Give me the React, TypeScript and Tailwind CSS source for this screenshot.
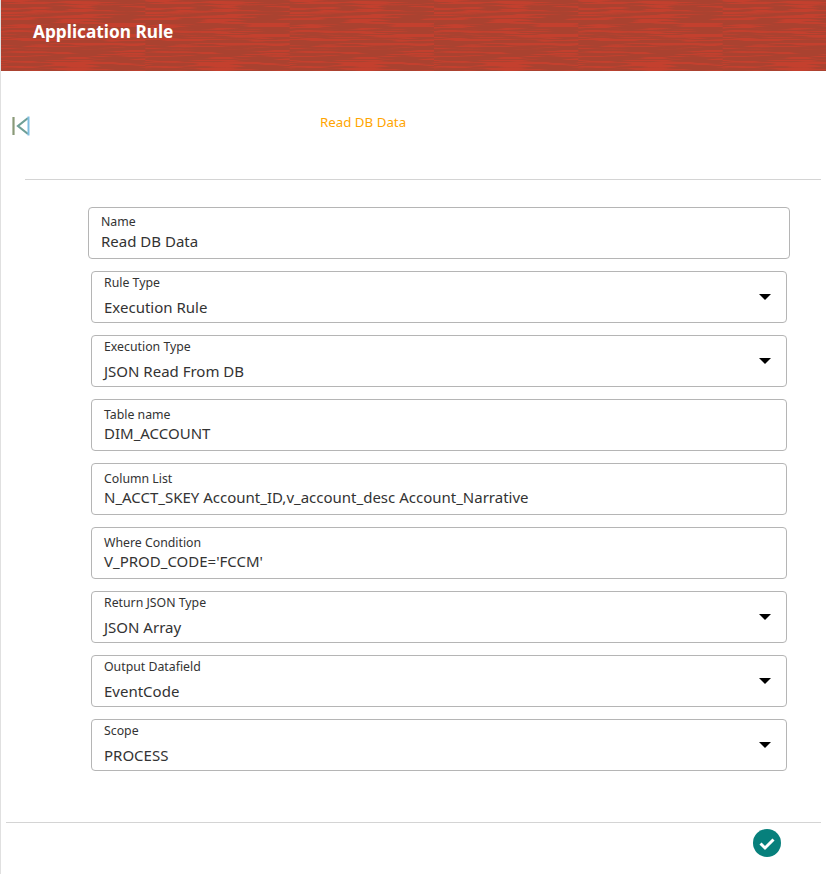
import React from 'react';

const font = "font-['Noto_Sans','Open_Sans',sans-serif]";

const WoodHeader = () => (
  <div className="relative h-[71px] bg-[#aa4230] overflow-hidden">
    <svg className="absolute inset-0 w-full h-full">
      <defs>
        <filter id="grain" x="0" y="0" width="100%" height="100%" colorInterpolationFilters="sRGB">
          <feTurbulence type="fractalNoise" baseFrequency="0.02 0.48" numOctaves="2" seed="11" />
          <feColorMatrix
            type="matrix"
            values="0 0 0 0 0.77  0 0 0 0 0.25  0 0 0 0 0.18  9 0 0 0 -4.4"
          />
        </filter>
        <pattern id="wood" width="144.33" height="71" patternUnits="userSpaceOnUse">
          <rect width="144.33" height="71" filter="url(#grain)" />
        </pattern>
      </defs>
      <rect width="100%" height="100%" fill="url(#wood)" />
    </svg>
    <h1 className="relative pl-[32px] pt-[19px] text-[17.25px] leading-[25px] font-bold text-white">Application Rule</h1>
  </div>
);

const Field: React.FC<{ label: string; value: string; select?: boolean; wide?: boolean }> = ({ label, value, select, wide }) => (
  <div
    className={`relative h-[52px] rounded-[4px] border border-[#b5b5b5] bg-white text-[#333] ${wide ? 'mx-[-3px] pt-[6px]' : ''} ${
      select ? 'pt-[3px]' : wide ? '' : 'pt-[7px]'
    } pl-[12px]`}
  >
    <div className="text-[12.3px] leading-[16px]">{label}</div>
    <div className={`text-[15px] leading-[20px] ${select ? 'mt-[6px]' : wide ? 'mt-[1px]' : 'mt-0'}`}>{value}</div>
    {select && (
      <span className="absolute right-[15px] top-[22px] w-0 h-0 border-x-[6px] border-x-transparent border-t-[6px] border-t-black" />
    )}
  </div>
);

export default function App() {
  return (
    <div className={`${font} w-[826px] h-[874px] bg-white border-l border-[#e0e0e0] overflow-hidden`}>
      <WoodHeader />

      <div className="relative h-[108px]">
        <svg className="absolute left-[11px] top-[45px]" width="18" height="20" viewBox="0 0 18 20">
          <path d="M1.5 1v18" stroke="#8a9a78" strokeWidth="2.2" fill="none" />
          <path d="M16 2 6 10l10 8" stroke="#6f9f96" strokeWidth="2.2" fill="none" />
          <path d="M16.5 0.5v19" stroke="#7dbde0" strokeWidth="2" fill="none" />
        </svg>
        <div className="pt-[42px] pl-[319px] text-[13.3px] leading-[18px] text-[#ffa500]">Read DB Data</div>
      </div>

      <div className="ml-[24px] mr-[5px] border-t border-[#d4d4d4]" />

      <div className="ml-[90px] w-[696px] mt-[27px] flex flex-col gap-[12px]">
        <Field wide label="Name" value="Read DB Data" />
        <Field select label="Rule Type" value="Execution Rule" />
        <Field select label="Execution Type" value="JSON Read From DB" />
        <Field label="Table name" value="DIM_ACCOUNT" />
        <Field label="Column List" value="N_ACCT_SKEY Account_ID,v_account_desc Account_Narrative" />
        <Field label="Where Condition" value="V_PROD_CODE='FCCM'" />
        <Field select label="Return JSON Type" value="JSON Array" />
        <Field select label="Output Datafield" value="EventCode" />
        <Field select label="Scope" value="PROCESS" />
      </div>

      <div className="ml-[5px] mr-[5px] mt-[51px] border-t border-[#d4d4d4]" />

      <div className="flex justify-end pr-[45px] pt-[6px]">
        <svg width="28" height="28" viewBox="0 0 28 28">
          <circle cx="14" cy="14" r="14" fill="#07807c" />
          <path d="M7.5 14.5l4.5 4.5 8.5-8.5" stroke="#fff" strokeWidth="3" fill="none" />
        </svg>
      </div>
    </div>
  );
}
